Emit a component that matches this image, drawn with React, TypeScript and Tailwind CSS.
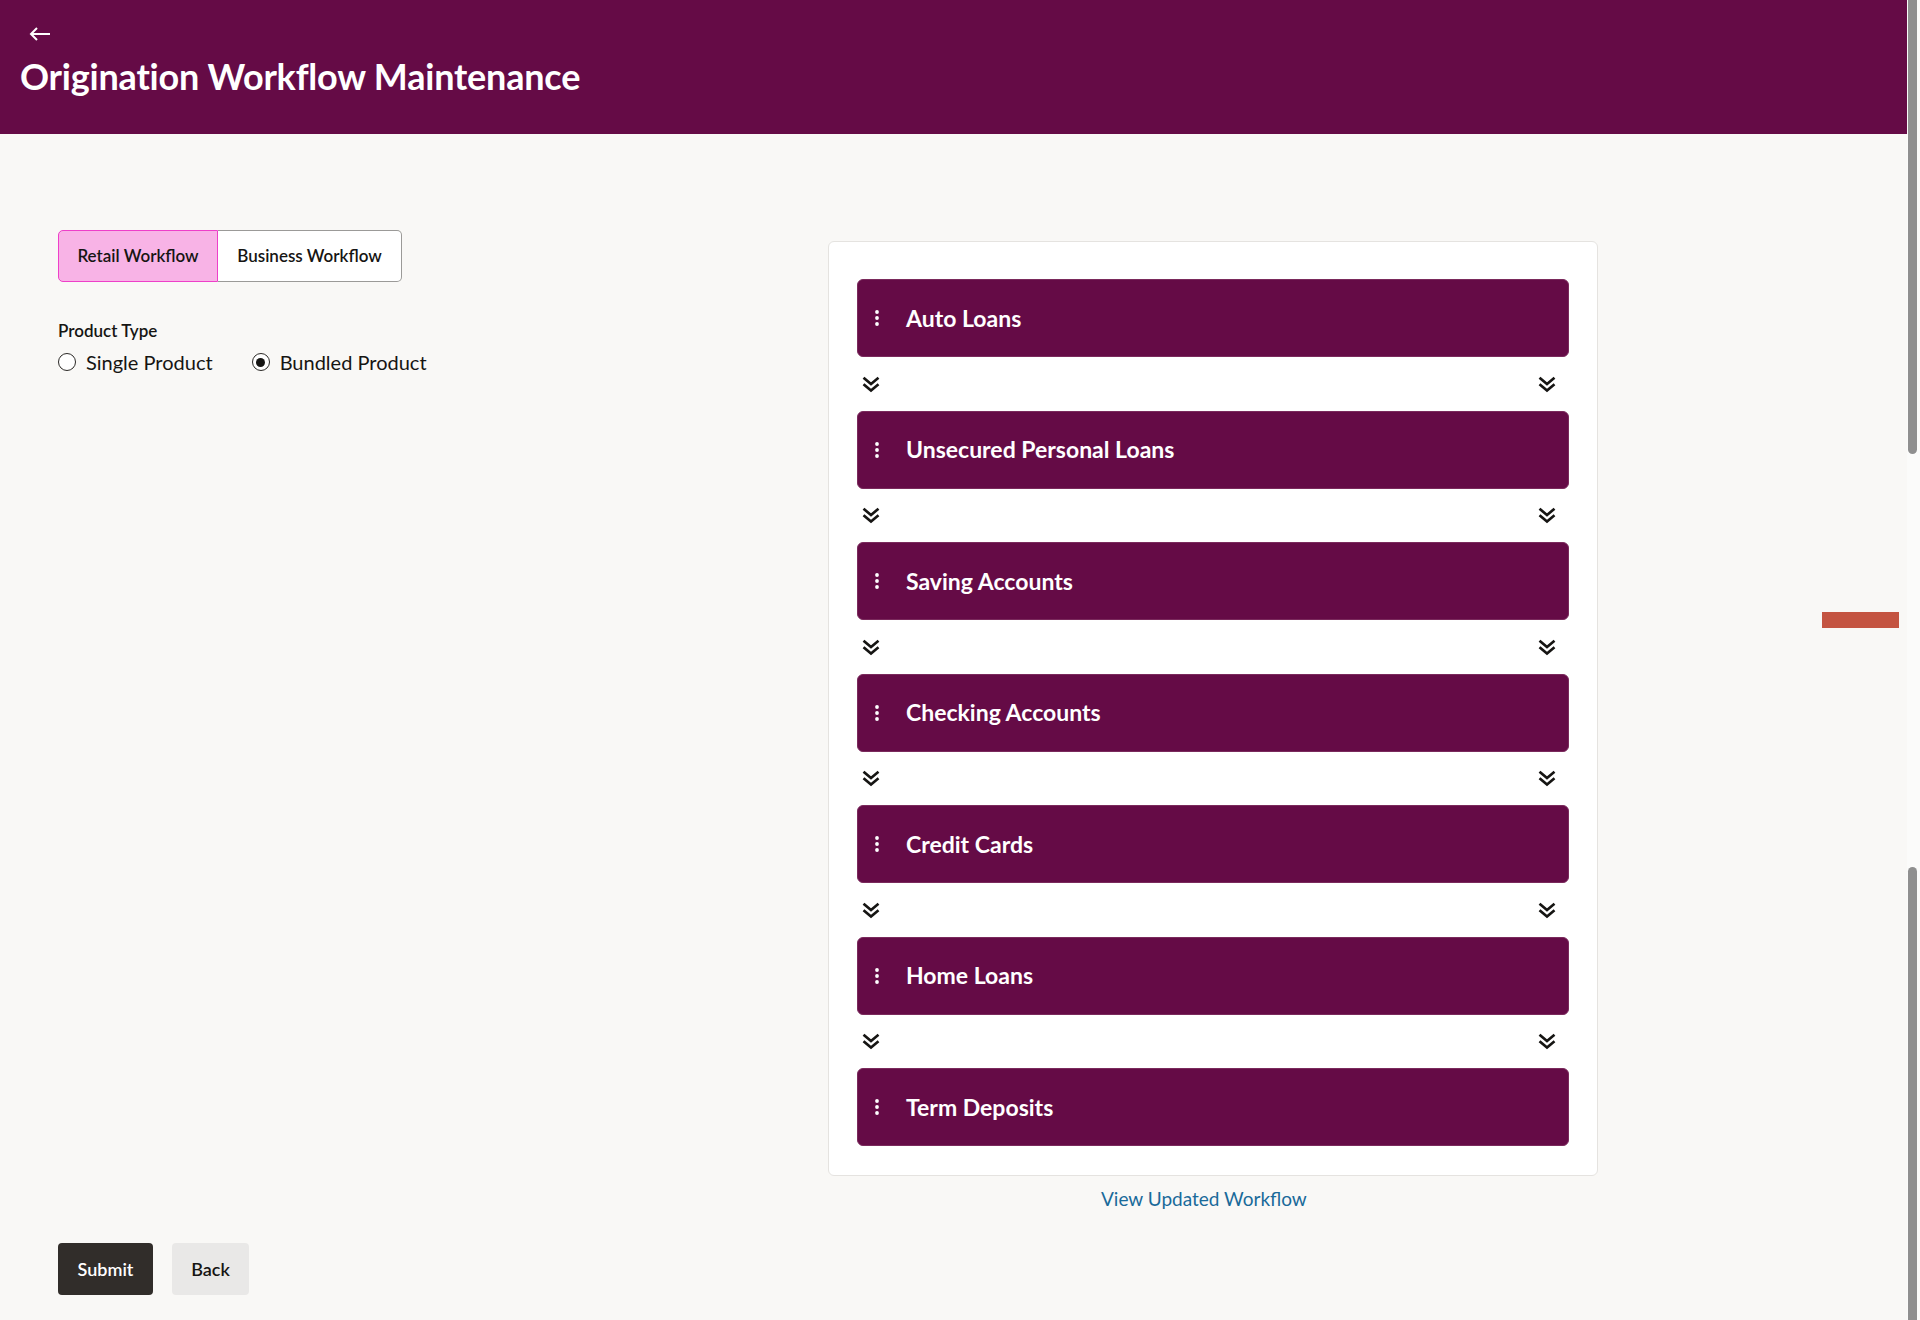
import React from "react";

const items = [
  "Auto Loans",
  "Unsecured Personal Loans",
  "Saving Accounts",
  "Checking Accounts",
  "Credit Cards",
  "Home Loans",
  "Term Deposits",
];

function Kebab() {
  return (
    <svg width="6" height="16" viewBox="0 0 6 16" className="shrink-0">
      <circle cx="3" cy="2" r="1.9" fill="white" />
      <circle cx="3" cy="8" r="1.9" fill="white" />
      <circle cx="3" cy="14" r="1.9" fill="white" />
    </svg>
  );
}

function DoubleChevron() {
  return (
    <svg width="18" height="17" viewBox="0 0 18 17" fill="none" stroke="#161513" strokeWidth="2.6" strokeLinecap="square" strokeLinejoin="miter">
      <path d="M2.5 2.5 L9 8 L15.5 2.5" />
      <path d="M2.5 9 L9 14.5 L15.5 9" />
    </svg>
  );
}

function Radio({ checked, label }: { checked: boolean; label: string }) {
  return (
    <label className="flex items-center">
      <span className="flex h-[18px] w-[18px] items-center justify-center rounded-full border-[1.5px] border-[#2b2926] bg-white">
        {checked && <span className="h-[9px] w-[9px] rounded-full bg-[#161513]" />}
      </span>
      <span className="ml-[10px] text-[20px] leading-none text-[#161513]">{label}</span>
    </label>
  );
}

export default function App() {
  return (
    <div className="relative flex min-h-[1320px] bg-[#f9f8f6] font-['Lato',sans-serif] text-[#161513]">
      <div className="flex flex-1 flex-col">
        <header className="h-[134px] bg-[#650b46] pl-[20px] pt-[27px] text-white">
          <svg width="22" height="14" viewBox="0 0 22 14" fill="none" stroke="white" strokeWidth="2" className="ml-[9px]">
            <path d="M21 7 H2" />
            <path d="M8 1 L2 7 L8 13" />
          </svg>
          <h1 className="mt-[17px] text-[36px] font-bold leading-none tracking-[-0.2px]">
            Origination Workflow Maintenance
          </h1>
        </header>

        <div className="flex pl-[58px]">
          <div className="w-[770px] pt-[96px]">
            <div className="flex h-[52px] w-fit text-[17px] font-semibold">
              <button className="flex w-[160px] items-center justify-center rounded-l-[5px] border border-[#ee3fc9] bg-[#f8b3e6]">
                Retail Workflow
              </button>
              <button className="flex w-[184px] items-center justify-center rounded-r-[5px] border border-l-0 border-[#9b9a98] bg-white">
                Business Workflow
              </button>
            </div>
            <div className="mt-[40px] text-[17px] font-semibold leading-none">Product Type</div>
            <div className="mt-[13px] flex gap-[39px]">
              <Radio checked={false} label="Single Product" />
              <Radio checked={true} label="Bundled Product" />
            </div>
          </div>

          <div className="w-[770px] pt-[107px]">
            <div className="rounded-[6px] border border-[#e5e3e0] bg-white px-[28px] pb-[29px] pt-[37px]">
              {items.map((name, i) => (
                <React.Fragment key={name}>
                  <div className="flex h-[78px] items-center rounded-[6px] border border-[#7a2a5c] bg-[#650b46] pl-[16px] text-white">
                    <Kebab />
                    <span className="ml-[26px] text-[23px] font-bold leading-none">{name}</span>
                  </div>
                  {i < items.length - 1 && (
                    <div className="flex h-[53.5px] items-center justify-between pl-[5px] pr-[13px] pt-[1px]">
                      <DoubleChevron />
                      <DoubleChevron />
                    </div>
                  )}
                </React.Fragment>
              ))}
            </div>
            <div className="mt-[11px] pl-[273px] text-[19px] leading-[24px] text-[#1a6a9a]">
              <a href="#">View Updated Workflow</a>
            </div>
          </div>
        </div>

        <div className="mt-[32px] flex gap-[19px] pl-[58px]">
          <button className="h-[52px] w-[95px] rounded-[4px] bg-[#312d2a] text-[18px] font-semibold text-white">
            Submit
          </button>
          <button className="h-[52px] w-[77px] rounded-[4px] bg-[#e9e8e7] text-[18px] font-semibold text-[#161513]">
            Back
          </button>
        </div>
      </div>

      <div className="flex h-[1320px] w-[13px] flex-col justify-between bg-[#fbfbfa]">
        <div className="ml-[1px] h-[454px] w-[9px] rounded-b-full bg-[#8f8f8f]" />
        <div className="ml-[1px] h-[453px] w-[9px] rounded-t-full bg-[#8f8f8f]" />
      </div>

      <div className="absolute left-[1822px] top-[612px] h-[16px] w-[77px] bg-[#c45441]" />
    </div>
  );
}
